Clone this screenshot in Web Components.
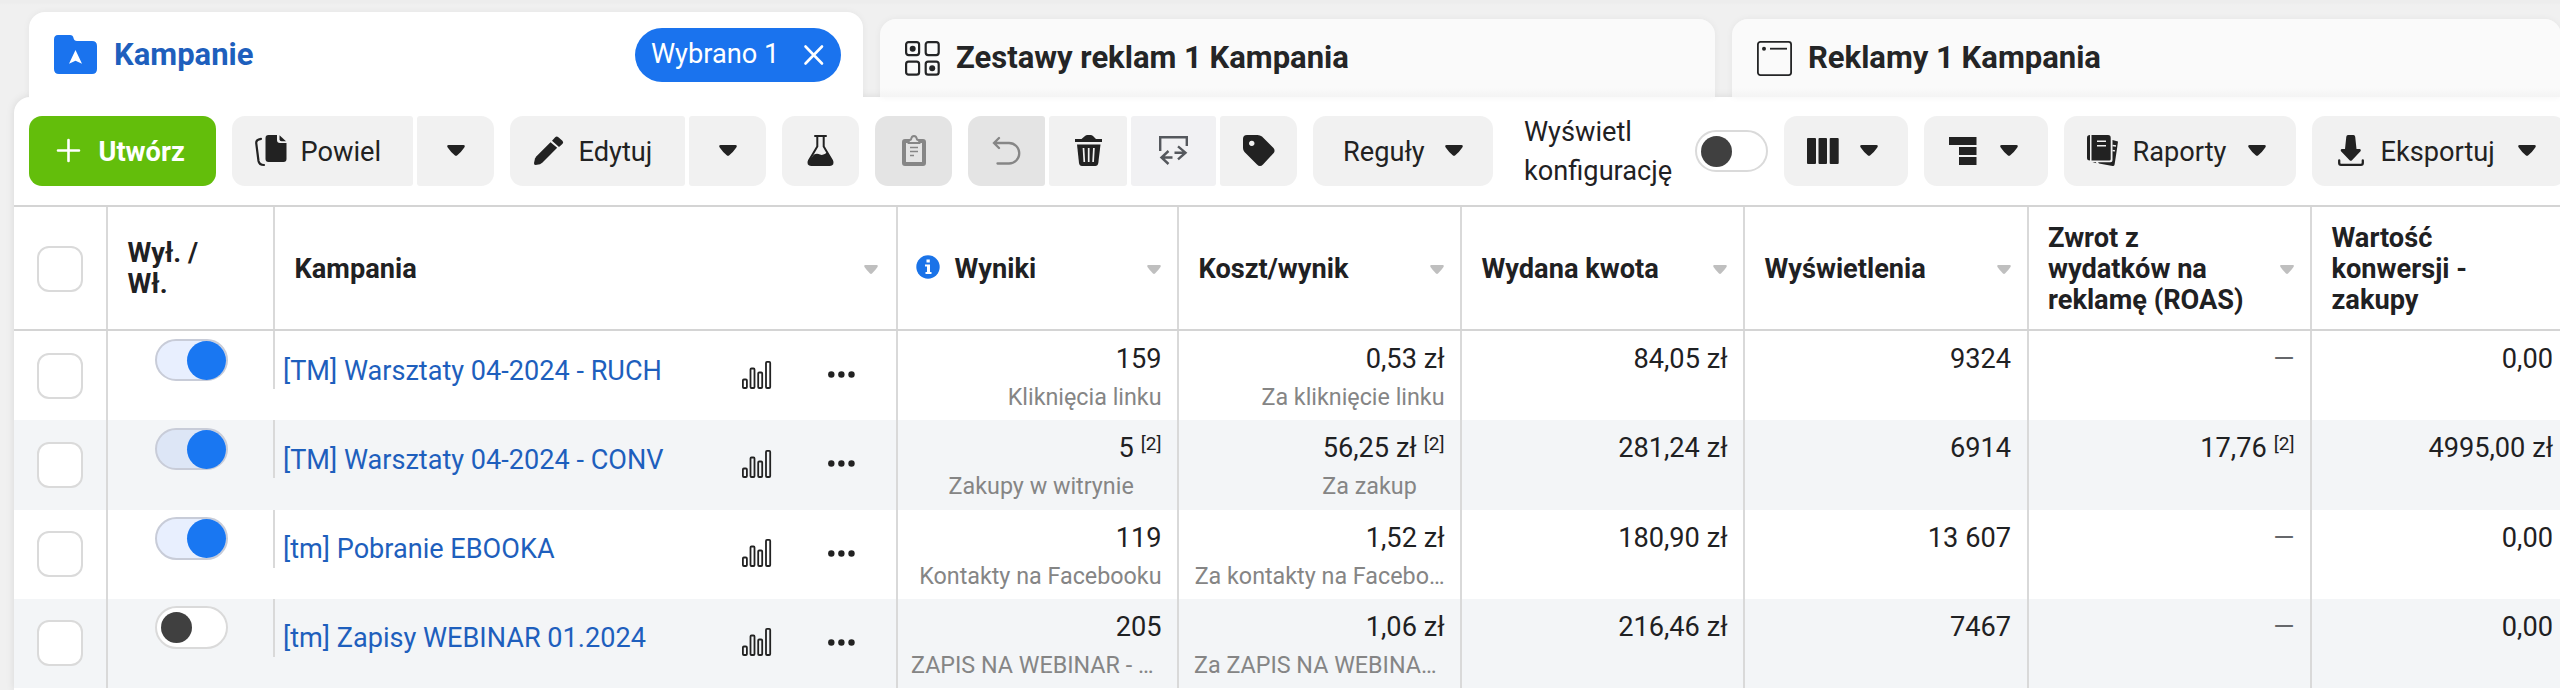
<!DOCTYPE html>
<html lang="pl">
<head>
<meta charset="utf-8">
<title>Menedżer reklam</title>
<style>
  body {
    margin: 0;
    height: 690px;
    overflow: hidden;
    background: #f0f0f0;
    font: 27.2px/31px Roboto, "Liberation Sans", sans-serif;
    color: #1f2123;
  }
</style>
</head>
<body>
<ads-manager></ads-manager>

<script>
// name: [width, height, shapes]
const icons = {
  folder: [43, 39, '<path d="M4 0h12q3 0 3.5 3 .5 3 3.500 3H38q5 0 5 5v23q0 5-5 5H5q-5 0-5-5V4.500Q0 0 4 0z"/><path fill="#fff" d="M21.500 15 28 28.700l-6.500-3-6.500 3z"/>'],
  adsets: [35, 35, '<g fill="none" stroke="currentColor" stroke-width="2.200"><rect x="1.100" y="1.100" width="13" height="13" rx="2.500"/><rect x="20.700" y="1.100" width="13" height="13" rx="2.500"/><rect x="1.100" y="20.700" width="13" height="13" rx="2.500"/><rect x="20.700" y="20.700" width="13" height="13" rx="2.500"/></g><circle cx="7.700" cy="7.700" r="3"/><circle cx="27.200" cy="27.200" r="3"/>'],
  ad: [35, 35, '<rect x=".9" y=".9" width="33.200" height="33.200" rx="2.500" fill="none" stroke="currentColor" stroke-width="1.800"/><circle cx="7" cy="7.700" r="2"/><path d="M13 6.800h17v1.800H13z"/>'],
  close: [20, 20, '<path d="m1.500 1.500 16.500 17M18 1.500l-16.500 17" fill="none" stroke="currentColor" stroke-width="2.600" stroke-linecap="round"/>'],
  plus: [23, 23, '<path d="M11.500 1v21M1 11.500h21" fill="none" stroke="currentColor" stroke-width="2.600" stroke-linecap="round"/>'],
  copy: [32, 31, '<path d="M13.500 0H22v5q0 3 3 3h6.500v16q0 3-3 3h-15q-3 0-3-3V3q0-3 3-3z"/><path d="M24.500.3 31 6.200h-4.500q-2 0-2-2z"/><path d="M6 3.800Q1 4.500 1.200 8L3.500 26q.7 4 5.500 4" fill="none" stroke="currentColor" stroke-width="2.200" stroke-linecap="round"/>'],
  pencil: [31, 29, '<path d="M17.500 6.200 24.200 11.800 9.500 26.500 7 28.200 2.500 29Q.8 29 1 27l1-4.500 1.500-2.300z"/><path d="m19 4.700 3.200-3.500q1.500-1.500 3.200 0l4 3.500q1.500 1.500.2 3l-3.600 3.400z"/>'],
  flask: [27, 31, '<path d="M8 1h11M10.300 1v10.500L2 25.500q-2 4.300 2.500 4.500h18q4.500-.2 2.500-4.500l-8.300-14V1" fill="none" stroke="currentColor" stroke-width="2" stroke-linecap="round"/><path d="M7 19.500q3-1.500 6 0t7.300-2.300L25.500 26q1.500 4-3 4.500h-18Q0 30 1.700 26z"/>'],
  clipboard: [24, 31, '<path fill-rule="evenodd" d="M3 4h18q3 0 3 3v21q0 3-3 3H3q-3 0-3-3V7q0-3 3-3zm1 4v19h16V8z"/><path d="M6.500 8q0-3 2.500-3.500Q9.500 1 12 1t3 3.500q2.500.5 2.500 3.500z" fill="#e4e4e4" stroke="currentColor" stroke-width="1.800"/><path d="M8 12.500h8M8 16.500h8M8 20.500h4" stroke="currentColor" stroke-width="1.600"/>'],
  undo: [27, 28, '<path d="M6 1 1 6l5 5M1.500 6H16a10 10 0 0 1 0 20.500H4.500" fill="none" stroke="currentColor" stroke-width="2.300" stroke-linecap="round"/>'],
  trash: [27, 31, '<path d="M0 4h6.500L10 1q1-1 2.500-1h3q1.500 0 2.500 1l3 3h6v3H0z"/><path d="M2 9.500h23.500L23.300 28q-.4 3-3 3H7q-2.600 0-3-3z"/><path d="m8.500 13 .8 14M13.700 13v14M18.900 13l-.8 14" stroke="#f1f1f1" stroke-width="1.700"/>'],
  abtest: [29, 30, '<path d="M1.200 15V1.200h26.600V10M15.500 16.700H27M19 10.300l7.500 6.400-7.500 6.600M13.500 21.500H2.500M9.500 15l-7 6.500 7 6.500" fill="none" stroke="currentColor" stroke-width="2.400"/>'],
  tag: [32, 31, '<path fill-rule="evenodd" d="M4 0h10.500Q17 0 19 1.500L30.500 13q2 2.500.2 5L20 29.500q-3 3-6 0L1.500 17Q0 15.500 0 13V4q0-4 4-4zm4.700 5.700a2.700 2.700 0 1 0 .1 0z"/>'],
  columns: [32, 26, '<rect width="9" height="26" rx="1"/><rect x="11.500" width="8.500" height="26" rx="1"/><rect x="22.700" width="9" height="26" rx="1"/>'],
  breakdown: [28, 28, '<path d="M0 0h27.500v8H0zM10 10h17.500v8H10zM10 20h17.500v8H10z"/>'],
  reports: [31, 31, '<path d="M3 0v25.500q-3 0-3-2.500V2.500Q0 0 3 0z"/><path fill-rule="evenodd" d="M4.500 0H21q2.700 0 2.700 2.700v21.500q0 1.300-1.300 1.300H4.500zM10 5.500V7h9V5.500zm0 4.500v1.500h9V10z"/><path d="M25.500 5 31 6.500q-.3 2-.8 6L27.600 29.500q-.3 1.700-2 1.500L12 28.500l-1-1.200h12.500q2 0 2-2z"/><path d="M5.500 27h3l1 1.200z"/><path d="m25.500 10.500 3.500.5M25.500 15.500l2.500.4" stroke="#f1f1f1" stroke-width="1.400"/>'],
  download: [26, 31, '<path d="M10 0h5.500q1.500 0 1.700 1.700L18.500 14H22q1.500.7.500 2.200l-8.500 9q-1.200 1.200-2.400 0L3 16.200Q2 14.700 3.500 14H7L8.300 1.700Q8.500 0 10 0z"/><path d="M1.200 25.500V28q0 1.800 1.800 1.800h20q1.800 0 1.800-1.800v-2.500" fill="none" stroke="currentColor" stroke-width="2.300" stroke-linecap="round"/>'],
  caret: [18, 11, '<path d="M1.600 0h14.800q2.300.3.900 2.500-3 4.500-7 7.700-1.300 1.100-2.600 0-4-3.200-7-7.700Q-.7.300 1.600 0z"/>'],
  sort: [14, 9, '<path d="M1 0h12q1.500.3.500 2-2.300 3.500-5.500 6.500-1 .9-2 0Q2.800 5.500.5 2-.5.300 1 0z"/>'],
  info: [24, 24, '<circle cx="12" cy="12" r="11.700"/><path fill="#fff" d="M10.500 4.500h3.300v3h-3.300zM9 9.500h5V17h1.500v2h-6v-2H11v-5.500H9z"/>'],
  chart: [30, 28, '<g fill="none" stroke="currentColor" stroke-width="1.800"><rect x=".9" y="18.500" width="4" height="8.500" rx="1"/><rect x="8.500" y="7.500" width="4" height="19.500" rx="1"/><rect x="16.200" y="11.500" width="4" height="15.500" rx="1"/><rect x="24" y=".9" width="4.200" height="26.100" rx="1"/></g>'],
  dots: [27, 7, '<circle cx="3.300" cy="3.500" r="3.200"/><circle cx="13.400" cy="3.500" r="3.200"/><circle cx="23.500" cy="3.500" r="3.200"/>']
}

class AdsElement extends HTMLElement {
  connectedCallback () {
    if (this.shadowRoot) return
    this.attachShadow({ mode: 'open' })
    this.shadowRoot.innerHTML = this.html()
  }
}

customElements.define('ads-icon', class extends AdsElement {
  html () {
    const [w, h, shape] = icons[this.getAttribute('name')]
    return `
<style>
  :host { display: inline-flex; flex: none; }
  svg { display: block; overflow: visible; }
</style>
<svg width="${w}" height="${h}" viewBox="0 0 ${w} ${h}" fill="currentColor">${shape}</svg>`
  }
})

customElements.define('ads-tab', class extends AdsElement {
  html () {
    return `
<style>
  :host {
    box-sizing: border-box;
    display: flex;
    align-items: center;
    gap: 16px;
    height: 78px;
    padding: 0 22px 0 25px;
    border-radius: 16px 16px 0 0;
    background: linear-gradient(#fafafa 88%, #f4f4f4);
    box-shadow: 0 0 7px rgba(0, 0, 0, .05);
    font-size: 31px;
    line-height: 36px;
    font-weight: 700;
    color: #242526;
  }
  :host([active]) {
    position: relative;
    z-index: 1;
    height: 85px;
    gap: 17px;
    background: #fff;
    color: #1e5fbd;
    clip-path: inset(-8px -8px 0);
  }
  :host([active]) ads-icon { color: #1a73ee; }
  .label { flex: 1; white-space: nowrap; }
</style>
<ads-icon name="${this.getAttribute('icon')}"></ads-icon>
<span class="label"><slot></slot></span>
<slot name="pill"></slot>`
  }
})

customElements.define('ads-pill', class extends AdsElement {
  html () {
    return `
<style>
  :host {
    box-sizing: border-box;
    display: flex;
    align-items: center;
    justify-content: space-between;
    width: 206px;
    height: 54px;
    padding: 0 17px 0 16px;
    border-radius: 27px;
    background: #1a73ee;
    color: #fff;
    font-size: 27.2px;
    line-height: 31px;
    font-weight: 400;
  }
</style>
<span><slot></slot></span>
<ads-icon name="close"></ads-icon>`
  }
})

customElements.define('ads-button', class extends AdsElement {
  html () {
    const icon = this.getAttribute('icon')
    return `
<style>
  :host {
    box-sizing: border-box;
    display: flex;
    flex: none;
    align-items: center;
    width: var(--w, 77px);
    height: 69.4px;
    padding: 0 30px 0 23px;
    border-radius: var(--r, 13px);
    background: #f1f1f1;
    color: #222;
    white-space: nowrap;
  }
  :host([primary]) {
    padding-left: 24px;
    background: #63be0b;
    color: #fff;
    font-weight: 700;
  }
  :host([disabled]) { background: #e4e4e4; color: #868686; }
  :host([single]) { justify-content: center; padding: 0; }
  :host([tone]) { color: #55585d; background: #f1f1f3; }
  .icon { display: flex; justify-content: center; width: 31px; }
  .label { padding: 2.5px 0 0 7px; }
  .icon + .label { padding-left: 14.5px; }
  .caret { margin-left: auto; }
</style>
${icon ? `<span class="icon"><ads-icon name="${icon}"></ads-icon></span>` : ''}
${this.hasAttribute('single') ? '' : '<span class="label"><slot></slot></span>'}
${this.hasAttribute('menu') ? '<ads-icon class="caret" name="caret"></ads-icon>' : ''}`
  }
})

// buttons joined with a thin gap, only the outer corners stay round
customElements.define('ads-group', class extends AdsElement {
  html () {
    return `
<style>
  :host { display: flex; flex: none; gap: 4px; }
  ::slotted(*) { --r: 3px; }
  ::slotted(:first-child) { --r: 13px 3px 3px 13px; }
  ::slotted(:last-child) { --r: 3px 13px 13px 3px; }
</style>
<slot></slot>`
  }
})

customElements.define('ads-switch', class extends AdsElement {
  html () {
    return `
<style>
  :host {
    box-sizing: border-box;
    display: flex;
    flex: none;
    align-items: center;
    width: 73px;
    height: 42.5px;
    padding: 0 4px;
    border: 2px solid #dadada;
    border-radius: 22px;
    background: #fff;
  }
  :host([on]) {
    justify-content: flex-end;
    padding: 0;
    border-color: #c8ccd8;
    background: rgba(30, 100, 242, .1);
  }
  i { width: 31px; height: 31px; border-radius: 50%; background: #404040; }
  :host([on]) i { width: 39px; height: 39px; background: #1977f2; }
</style>
<i></i>`
  }
})

customElements.define('ads-checkbox', class extends AdsElement {
  html () {
    return `
<style>
  :host {
    box-sizing: border-box;
    display: block;
    width: 46px;
    height: 46px;
    border: 2px solid #dadada;
    border-radius: 12px;
    background: #fff;
  }
</style>`
  }
})

customElements.define('ads-toolbar', class extends AdsElement {
  html () {
    return `
<style>
  :host {
    display: flex;
    gap: 16px;
    align-items: center;
    height: 69.4px;
    padding: 19.3px 0 19.3px 15px;
  }
  .config {
    box-sizing: border-box;
    display: flex;
    flex: none;
    align-items: center;
    justify-content: space-between;
    width: 259px;
    padding-left: 15px;
    line-height: 39px;
  }
  .config span { width: 155px; padding-top: 2.5px; }
</style>
<ads-button primary icon="plus" style="--w:187px">Utwórz</ads-button>
<ads-group>
  <ads-button icon="copy" style="--w:181px">Powiel</ads-button>
  <ads-button single icon="caret"></ads-button>
</ads-group>
<ads-group>
  <ads-button icon="pencil" style="--w:175px">Edytuj</ads-button>
  <ads-button single icon="caret"></ads-button>
</ads-group>
<ads-button single icon="flask"></ads-button>
<ads-button single disabled icon="clipboard"></ads-button>
<ads-group>
  <ads-button single disabled icon="undo"></ads-button>
  <ads-button single icon="trash" style="--w:78px"></ads-button>
  <ads-button single tone icon="abtest" style="--w:85px"></ads-button>
  <ads-button single icon="tag"></ads-button>
</ads-group>
<ads-button menu style="--w:180px">Reguły</ads-button>
<div class="config"><span>Wyświetl konfigurację</span><ads-switch></ads-switch></div>
<ads-button menu icon="columns" style="--w:124px"></ads-button>
<ads-button menu icon="breakdown" style="--w:124px"></ads-button>
<ads-button menu icon="reports" style="--w:232px">Raporty</ads-button>
<ads-button menu icon="download" style="--w:254px">Eksportuj</ads-button>`
  }
})

customElements.define('ads-head', class extends AdsElement {
  html () {
    return `
<style>
  :host {
    box-sizing: border-box;
    display: flex;
    align-items: center;
    padding: 0 16px 0 19.5px;
    border-right: 2px solid #d9d9d9;
    font-weight: 700;
  }
  :host([wide]) { padding-right: 18px; }
  :host([check]) { padding-left: 23px; }
  :host(:last-child) { border: 0; }
  .label { max-width: var(--label, 200px); padding-top: 2px; }
  .info { margin: -3px 15px 0 -2px; color: #1a73e8; }
  .sort { margin: 2px 0 0 auto; color: #bfbfbf; }
</style>
${this.hasAttribute('info') ? '<ads-icon class="info" name="info"></ads-icon>' : ''}
<span class="label"><slot></slot></span>
${this.hasAttribute('sort') ? '<ads-icon class="sort" name="sort"></ads-icon>' : ''}`
  }
})

customElements.define('ads-row', class extends AdsElement {
  html () {
    const { name, on, metrics } = this.data
    return `
<style>
  :host {
    display: grid;
    grid-template-columns: var(--cols);
    height: 89.2px;
    background: #fff;
  }
  :host(:nth-of-type(even)) { background: #f3f5f7; }
  .check, .toggle, .name, .metric { box-sizing: border-box; border-right: 2px solid #d9d9d9; }
  .check, .toggle, .name { display: flex; }
  .check { align-items: center; padding-left: 23px; }
  .toggle { justify-content: center; padding: 7.5px 0 0 1px; height: 58px; }
  .name { padding: 24.5px 41px 0 8px; color: #1e5fbd; }
  .name a { flex: 1; white-space: nowrap; font-size: 27.1px; }
  .name ads-icon { color: #222; }
  .chart { margin-top: 5px; }
  .more { margin: 15.5px 0 0 56px; }
  .metric {
    display: grid;
    grid-template-columns: 1fr auto;
    grid-auto-rows: 31px;
    row-gap: 7px;
    justify-items: end;
    padding: 13px 15.5px 0 0;
    white-space: nowrap;
  }
  .metric:last-child { border: 0; padding-right: 7px; }
  small { grid-column: 1; font-size: 23.3px; color: #858585; }
  sup { padding-left: 7px; font-size: 19px; line-height: 22px; vertical-align: top; }
  .none { color: #65676b; }
</style>
<div class="check"><ads-checkbox></ads-checkbox></div>
<div class="toggle"><ads-switch ${on ? 'on' : ''}></ads-switch></div>
<div class="name"><a>${name}</a><ads-icon class="chart" name="chart"></ads-icon><ads-icon class="more" name="dots"></ads-icon></div>
${metrics.map(([value, sub, note, shift]) => `
<div class="metric">
  <span class="${value === '—' ? 'none' : ''}">${value}</span>
  ${note ? `<sup>${note}</sup>` : ''}
  ${sub ? `<small style="margin-right:${shift || 0}px">${sub}</small>` : ''}
</div>`).join('')}`
  }
})

const campaigns = [
  { name: '[TM] Warsztaty 04-2024 - RUCH', on: true, metrics: [['159', 'Kliknięcia linku'], ['0,53 zł', 'Za kliknięcie linku'], ['84,05 zł'], ['9324'], ['—'], ['0,00']] },
  { name: '[TM] Warsztaty 04-2024 - CONV', on: true, metrics: [['5', 'Zakupy w witrynie', '[2]'], ['56,25 zł', 'Za zakup', '[2]'], ['281,24 zł'], ['6914'], ['17,76', '', '[2]'], ['4995,00 zł']] },
  { name: '[tm] Pobranie EBOOKA', on: true, metrics: [['119', 'Kontakty na Facebooku'], ['1,52 zł', 'Za kontakty na Facebo…'], ['180,90 zł'], ['13 607'], ['—'], ['0,00']] },
  { name: '[tm] Zapisy WEBINAR 01.2024', on: false, metrics: [['205', 'ZAPIS NA WEBINAR - …', '', 8], ['1,06 zł', 'Za ZAPIS NA WEBINA…', '', 8], ['216,46 zł'], ['7467'], ['—'], ['0,00']] }
]

customElements.define('ads-table', class extends AdsElement {
  connectedCallback () {
    super.connectedCallback()
    for (const data of campaigns) {
      const row = document.createElement('ads-row')
      row.data = data
      this.shadowRoot.append(row)
    }
  }

  html () {
    return `
<style>
  :host {
    --cols: 94px 167px 623px 281px 283px 283px 283.5px 283.5px 248px;
    display: block;
  }
  header {
    box-sizing: border-box;
    display: grid;
    grid-template-columns: var(--cols);
    height: 126.3px;
    border: solid #d4d4d4;
    border-width: 2px 0;
  }
</style>
<header>
  <ads-head check><ads-checkbox></ads-checkbox></ads-head>
  <ads-head style="--label:90px">Wył. / Wł.</ads-head>
  <ads-head sort wide>Kampania</ads-head>
  <ads-head sort info>Wyniki</ads-head>
  <ads-head sort>Koszt/wynik</ads-head>
  <ads-head sort>Wydana kwota</ads-head>
  <ads-head sort>Wyświetlenia</ads-head>
  <ads-head sort>Zwrot z wydatków na reklamę (ROAS)</ads-head>
  <ads-head>Wartość konwersji - zakupy</ads-head>
</header>`
  }
})

customElements.define('ads-manager', class extends AdsElement {
  html () {
    return `
<style>
  :host { display: block; width: 2560px; }
  nav {
    box-sizing: border-box;
    display: grid;
    grid-template-columns: 834px 835px 829px;
    column-gap: 17px;
    align-items: end;
    height: 97px;
    padding-left: 29px;
    background: linear-gradient(#ededed 3px, #f0f0f0 5px);
  }
  main {
    margin-left: 14px;
    height: 593px;
    background: #fff;
    border-radius: 16px 0 0;
    box-shadow: 0 0 8px rgba(0, 0, 0, .1);
  }
</style>
<nav>
  <ads-tab active icon="folder">Kampanie<ads-pill slot="pill">Wybrano 1</ads-pill></ads-tab>
  <ads-tab icon="adsets">Zestawy reklam 1 Kampania</ads-tab>
  <ads-tab icon="ad">Reklamy 1 Kampania</ads-tab>
</nav>
<main>
  <ads-toolbar></ads-toolbar>
  <ads-table></ads-table>
</main>`
  }
})
</script>
</body>
</html>
